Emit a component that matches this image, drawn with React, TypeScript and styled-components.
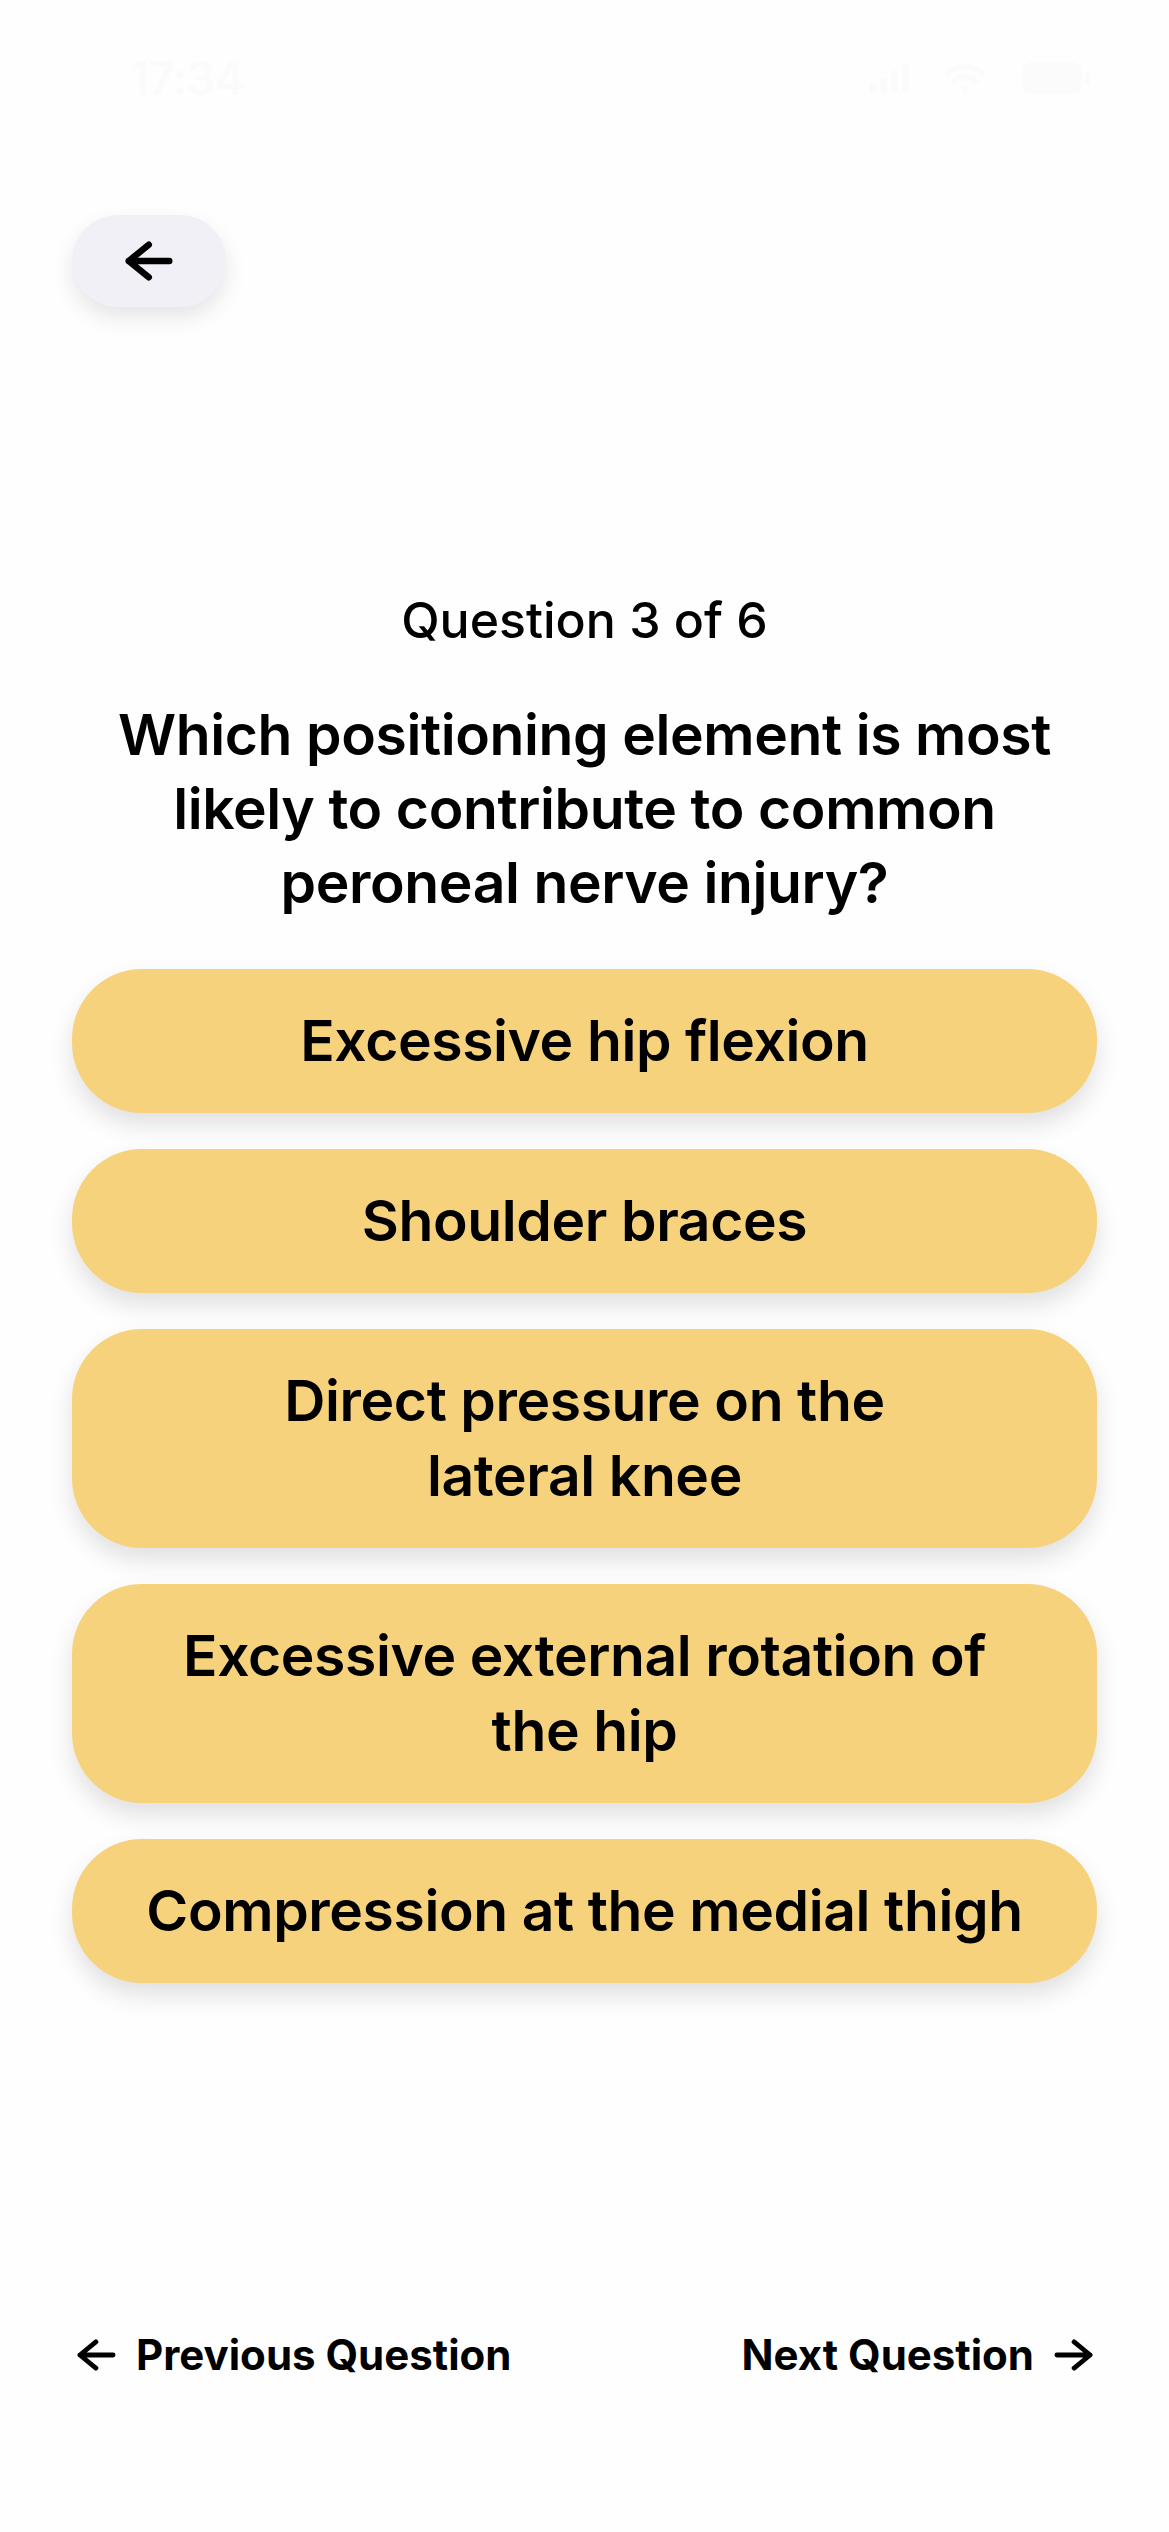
import React from "react";
import styled, { createGlobalStyle } from "styled-components";

const GlobalStyle = createGlobalStyle`
  html, body {
    margin: 0;
    padding: 0;
    background: #fefefe;
  }
  body {
    font-family: Inter, "Noto Sans", "Liberation Sans", sans-serif;
    color: #000;
    -webkit-font-smoothing: antialiased;
  }
  * { box-sizing: border-box; }
`;

const faint = "#fbfbfb";

const Screen = styled.div`
  width: 1169px;
  min-height: 2532px;
  display: flex;
  flex-direction: column;
  background: #fefefe;
`;

const StatusBar = styled.div`
  height: 155px;
  display: flex;
  align-items: center;
  justify-content: space-between;
  padding: 0 78px 0 130px;
  color: ${faint};
`;

const Clock = styled.span`
  font-size: 46px;
  font-weight: 600;
  letter-spacing: -1px;
`;

const StatusIcons = styled.div`
  display: flex;
  align-items: center;
  gap: 34px;
`;

const Content = styled.main`
  flex: 1;
  display: flex;
  flex-direction: column;
  padding: 0 72px;
`;

const BackButton = styled.button`
  margin-top: 60px;
  width: 154px;
  height: 92px;
  border: none;
  border-radius: 46px;
  background: #f1f0f6;
  box-shadow: 0 10px 22px rgba(0, 0, 0, 0.1);
  display: flex;
  align-items: center;
  justify-content: center;
  padding: 0;
  cursor: pointer;
`;

const Counter = styled.div`
  margin-top: 283px;
  text-align: center;
  font-size: 50px;
  line-height: 60px;
  font-weight: 500;
`;

const QuestionText = styled.h1`
  margin: 48px 0 0;
  text-align: center;
  font-size: 57px;
  line-height: 74px;
  font-weight: 600;
  letter-spacing: -0.4px;
`;

const Options = styled.div`
  margin-top: 49px;
  display: flex;
  flex-direction: column;
  gap: 36px;
`;

const Option = styled.button`
  width: 100%;
  border: none;
  background: #f7d27c;
  border-radius: 70px;
  padding: 34px 40px 35px;
  font-family: inherit;
  font-size: 57px;
  line-height: 75px;
  font-weight: 600;
  letter-spacing: -0.4px;
  color: #000;
  text-align: center;
  box-shadow: 0 12px 24px rgba(0, 0, 0, 0.12);
  cursor: pointer;
`;

const NavRow = styled.nav`
  margin-top: auto;
  display: flex;
  justify-content: space-between;
  align-items: center;
  padding: 0 76px 151px 77px;
`;

const NavLink = styled.button`
  border: none;
  background: none;
  padding: 0;
  display: flex;
  align-items: center;
  gap: 20px;
  font-family: inherit;
  font-size: 42px;
  line-height: 52px;
  font-weight: 700;
  color: #000;
  cursor: pointer;
`;

const Arrow = ({ dir, w, h, sw }: { dir: "left" | "right"; w: number; h: number; sw: number }) => {
  const p = sw / 2 + 0.5;
  const head = h / 2 + 2;
  const mid = h / 2;
  const d =
    dir === "left"
      ? `M${p + head - 2} ${p} L${p} ${mid} L${p + head - 2} ${h - p} M${p} ${mid} H${w - p}`
      : `M${w - p - head + 2} ${p} L${w - p} ${mid} L${w - p - head + 2} ${h - p} M${w - p} ${mid} H${p}`;
  return (
    <svg width={w} height={h} viewBox={`0 0 ${w} ${h}`} fill="none">
      <path d={d} stroke="#000" strokeWidth={sw} strokeLinecap="round" strokeLinejoin="round" />
    </svg>
  );
};

const options = [
  "Excessive hip flexion",
  "Shoulder braces",
  "Direct pressure on the\nlateral knee",
  "Excessive external rotation of\nthe hip",
  "Compression at the medial thigh",
];

const OptionLines = ({ text }: { text: string }) => (
  <>
    {text.split("\n").map((l, i, arr) => (
      <React.Fragment key={i}>
        {l}
        {i < arr.length - 1 && <br />}
      </React.Fragment>
    ))}
  </>
);

export default function App() {
  return (
    <>
      <GlobalStyle />
      <Screen>
        <StatusBar>
          <Clock>17:34</Clock>
          <StatusIcons>
            <svg width="40" height="30" viewBox="0 0 40 30">
              <rect x="0" y="20" width="7" height="10" rx="2" fill={faint} />
              <rect x="11" y="14" width="7" height="16" rx="2" fill={faint} />
              <rect x="22" y="7" width="7" height="23" rx="2" fill={faint} />
              <rect x="33" y="0" width="7" height="30" rx="2" fill={faint} />
            </svg>
            <svg width="44" height="32" viewBox="0 0 44 32">
              <path d="M4 12 A26 26 0 0 1 40 12" stroke={faint} strokeWidth="5" fill="none" strokeLinecap="round" />
              <path d="M11 19 A16 16 0 0 1 33 19" stroke={faint} strokeWidth="5" fill="none" strokeLinecap="round" />
              <circle cx="22" cy="27" r="4" fill={faint} />
            </svg>
            <svg width="70" height="34" viewBox="0 0 70 34">
              <rect x="1" y="1" width="60" height="32" rx="9" fill={faint} />
              <rect x="64" y="11" width="5" height="12" rx="2" fill={faint} />
            </svg>
          </StatusIcons>
        </StatusBar>
        <Content>
          <BackButton aria-label="Back">
            <Arrow dir="left" w={48} h={40} sw={6.5} />
          </BackButton>
          <Counter>Question 3 of 6</Counter>
          <QuestionText>
            Which positioning element is most likely to contribute to common peroneal nerve injury?
          </QuestionText>
          <Options>
            {options.map((o) => (
              <Option key={o}>
                <OptionLines text={o} />
              </Option>
            ))}
          </Options>
        </Content>
        <NavRow>
          <NavLink>
            <Arrow dir="left" w={39} h={32} sw={4.8} />
            Previous Question
          </NavLink>
          <NavLink>
            Next Question
            <Arrow dir="right" w={39} h={32} sw={4.8} />
          </NavLink>
        </NavRow>
      </Screen>
    </>
  );
}
